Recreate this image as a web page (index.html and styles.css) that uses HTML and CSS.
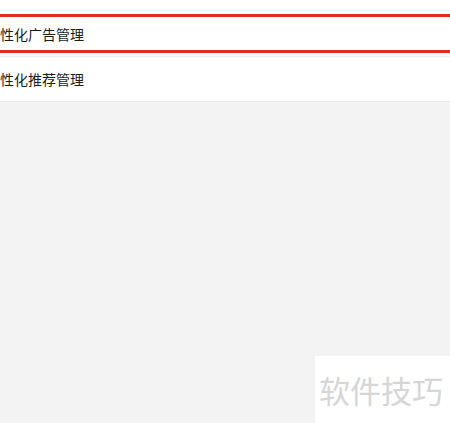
FILE: index.html
```html
<!DOCTYPE html>
<html lang="zh-CN">
<head>
  <meta charset="UTF-8">
  <title>个性化管理</title>
  <link rel="stylesheet" href="styles.css">
</head>
<body>
  <div class="lista">
    <div class="topo"></div>
    <div class="item ativo">性化广告管理</div>
    <div class="item">性化推荐管理</div>
  </div>

  <div class="marca">软件技巧</div>
</body>
</html>
```

FILE: styles.css
```css
body {
  margin: 0;
  background-color: #f3f3f3;
  font-family: "Noto Sans CJK SC", "Noto Sans", sans-serif;
  color: #1c1c1c;
  height: 423px;
  overflow: hidden;
}

.lista {
  background-color: #fff;
  border-bottom: 1px solid #ebebeb;
}

.topo {
  height: 10px;
  border-bottom: 1px solid #ebeeec;
}

.item {
  font-size: 14px;
  display: flex;
  align-items: center;
  height: 44px;
}

.item + .item {
  border-top: 1px solid #ebeeec;
  margin-top: 3px;
}

.ativo {
  height: 33px;
  margin-top: 3px;
  border-top: 3px solid #e12b1f;
  border-bottom: 3px solid #e12b1f;
}

.marca {
  position: absolute;
  left: 315px;
  top: 356px;
  width: 135px;
  height: 67px;
  background-color: #fff;
  color: #d6d6d6;
  font-size: 31px;
  line-height: 67px;
  text-indent: 4px;
  white-space: nowrap;
  overflow: hidden;
}
```
